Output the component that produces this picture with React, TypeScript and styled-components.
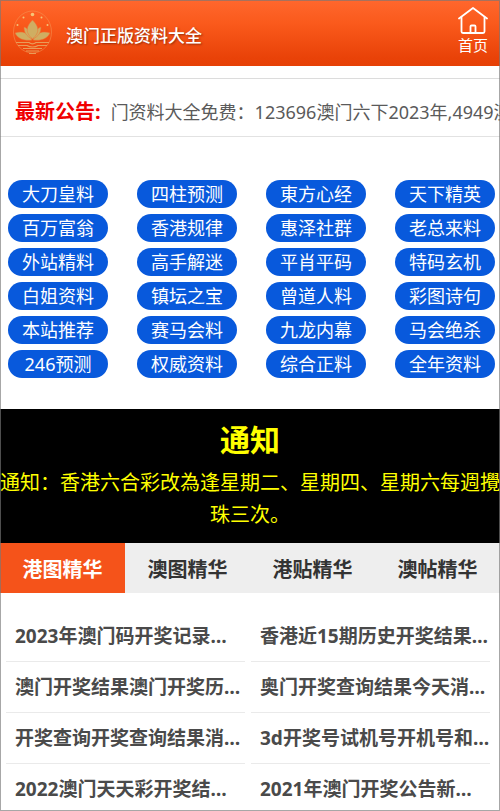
import React, { useState } from "react";
import styled, { createGlobalStyle } from "styled-components";

const GlobalStyle = createGlobalStyle`
  *, *::before, *::after { box-sizing: border-box; }
  body {
    margin: 0;
    background: #fff;
    color: #444;
    font-family: "Noto Sans", "Noto Sans CJK SC", sans-serif;
  }
  a { color: inherit; text-decoration: none; }
`;

const Page = styled.div`
  width: 100%;
  overflow: hidden;

  &::after {
    content: "";
    position: fixed;
    inset: 0;
    border: 1px solid rgba(120, 120, 120, 0.65);
    pointer-events: none;
  }
`;

const Header = styled.header`
  display: flex;
  align-items: center;
  height: 66px;
  padding: 0 12px;
  background: linear-gradient(#ff672d, #fa5a1c 35%, #e94208 88%, #e64006);
  color: #fff;
`;

const Brand = styled.h1`
  flex: 1;
  margin: 6px 0 0 13px;
  font-size: 17px;
  line-height: 24px;
  font-weight: 500;
  text-shadow: 1px 1px 2px rgba(90, 20, 0, 0.6);
`;

const HomeLink = styled.a`
  display: flex;
  flex-direction: column;
  align-items: center;
  align-self: flex-start;
  padding-top: 7px;
  font-size: 15px;
  line-height: 20px;
`;

const Announcement = styled.section`
  display: flex;
  align-items: center;
  gap: 10px;
  margin-top: 12px;
  height: 59px;
  padding: 8px 0 0 15px;
  border-top: 1px solid #dcdcdc;
  border-bottom: 1px solid #e2e2e2;
  white-space: nowrap;
`;

const AnnouncementLabel = styled.strong`
  color: #f00000;
  font-size: 20px;
  line-height: 28px;
`;

const Ticker = styled.span`
  flex: 1;
  min-width: 0;
  overflow: hidden;
  color: #5a5a5a;
  font-size: 18px;
  line-height: 28px;
`;

const PillGrid = styled.nav`
  display: grid;
  grid-template-columns: repeat(4, 100px);
  justify-content: space-between;
  row-gap: 6px;
  padding: 43px 5px 31px 8px;
`;

const Pill = styled.a`
  height: 28px;
  border-radius: 14px;
  background: #0859dc;
  color: #fff;
  font-size: 18px;
  line-height: 28px;
  text-align: center;
`;

const Notice = styled.section`
  padding: 12px 0;
  background: #000;
  color: #ff0;
  text-align: center;
`;

const NoticeTitle = styled.h2`
  margin: 0 0 8px;
  font-size: 30px;
  line-height: 38px;
`;

const NoticeText = styled.p`
  margin: 0;
  font-size: 20px;
  line-height: 32px;
`;

const Tabs = styled.div`
  display: flex;
  background: #eee;
`;

const Tab = styled.button<{ $active: boolean }>`
  flex: 1;
  height: 50px;
  padding: 0;
  border: 0;
  background: ${(p) => (p.$active ? "#f5531a" : "transparent")};
  color: ${(p) => (p.$active ? "#fff" : "#333")};
  font: bold 20px "Noto Sans", "Noto Sans CJK SC", sans-serif;
  cursor: pointer;
`;

const ArticleList = styled.ul`
  display: grid;
  grid-template-columns: 1fr 1fr;
  column-gap: 6px;
  margin: 0;
  padding: 18px 10px 8px 6px;
  list-style: none;
`;

const Article = styled.li`
  padding: 12px 0 12px 9px;
  border-bottom: 1px solid #eaeaea;
  color: #4a4a4a;
  font-size: 19px;
  line-height: 26px;
  font-weight: bold;
  white-space: nowrap;

  &:nth-last-child(-n + 2) {
    padding-bottom: 0;
    border-bottom: 0;
  }
`;

const Logo = () => (
  <svg width="41" height="46" viewBox="0 0 41 46" fill="none" aria-hidden="true">
    <ellipse cx="20.500" cy="22" rx="19" ry="21" stroke="#f39a5a" strokeOpacity=".5" />
    <g fill="#f5c578">
      <circle cx="20.500" cy="4.500" r="1.800" />
      <circle cx="11.500" cy="7.500" r="1" />
      <circle cx="29.500" cy="7.500" r="1" />
      <circle cx="5.500" cy="15" r="1" />
      <circle cx="35.500" cy="15" r="1" />
    </g>
    <g fill="#cfae62" stroke="#ee7035" strokeWidth=".5">
      <path d="M20 30C12 31 6 29 3 23c6-2 14-1 17 7Z" />
      <path d="M21 30c8 1 14-1 17-7-6-2-14-1-17 7Z" />
      <path d="M20 29c-6-3-8-7-8-12 5 2 8 6 8 12Z" />
      <path d="M21 29c6-3 8-7 8-12-5 2-8 6-8 12Z" />
      <path d="M20.500 29c-8-7-6-13 0-19 6 6 8 12 0 19Z" />
    </g>
    <g stroke="#e99c58" strokeWidth="1.200">
      <path d="M4 32.500h13c2 1.500 5 1.500 7 0h13" />
      <path d="M6 35.500h9c3 2 8 2 11 0h9" />
      <path d="M11 38.500h19M14 41h13M17 43.500h7" />
    </g>
  </svg>
);

const HomeIcon = () => (
  <svg
    width="30"
    height="28"
    viewBox="0 0 30 28"
    fill="none"
    stroke="#fff"
    strokeWidth="1.800"
    strokeLinecap="round"
    strokeLinejoin="round"
    aria-hidden="true"
  >
    <path d="M1 11.500 15 1l14 10.500" />
    <path d="M3.500 10.500v14q0 1.500 1.500 1.500h20q1.500 0 1.500-1.500v-14" />
    <path d="M12.500 25.500v-6q0-1 1-1h3q1 0 1 1v6" />
  </svg>
);

const pills = [
  "大刀皇料", "四柱预测", "東方心经", "天下精英",
  "百万富翁", "香港规律", "惠泽社群", "老总来料",
  "外站精料", "高手解迷", "平肖平码", "特码玄机",
  "白姐资料", "镇坛之宝", "曾道人料", "彩图诗句",
  "本站推荐", "赛马会料", "九龙内幕", "马会绝杀",
  "246预测", "权威资料", "综合正料", "全年资料",
];

const tabs = ["港图精华", "澳图精华", "港贴精华", "澳帖精华"];

const articles = [
  "2023年澳门码开奖记录…",
  "香港近15期历史开奖结果…",
  "澳门开奖结果澳门开奖历…",
  "奥门开奖查询结果今天消…",
  "开奖查询开奖查询结果消…",
  "3d开奖号试机号开机号和…",
  "2022澳门天天彩开奖结…",
  "2021年澳门开奖公告新…",
];

export default function App() {
  const [active, setActive] = useState(0);

  return (
    <Page lang="zh-CN">
      <GlobalStyle />
      <Header>
        <Logo />
        <Brand>澳门正版资料大全</Brand>
        <HomeLink href="#">
          <HomeIcon />
          首页
        </HomeLink>
      </Header>
      <Announcement>
        <AnnouncementLabel>最新公告:</AnnouncementLabel>
        <Ticker>门资料大全免费：123696澳门六下2023年,4949澳</Ticker>
      </Announcement>
      <PillGrid>
        {pills.map((label) => (
          <Pill href="#" key={label}>{label}</Pill>
        ))}
      </PillGrid>
      <Notice>
        <NoticeTitle>通知</NoticeTitle>
        <NoticeText>
          通知：香港六合彩改為逢星期二、星期四、星期六每週攪珠三次。
        </NoticeText>
      </Notice>
      <Tabs role="tablist">
        {tabs.map((label, i) => (
          <Tab
            key={label}
            type="button"
            role="tab"
            aria-selected={i === active}
            $active={i === active}
            onClick={() => setActive(i)}
          >
            {label}
          </Tab>
        ))}
      </Tabs>
      <ArticleList>
        {articles.map((title) => (
          <Article key={title}>
            <a href="#">{title}</a>
          </Article>
        ))}
      </ArticleList>
    </Page>
  );
}
